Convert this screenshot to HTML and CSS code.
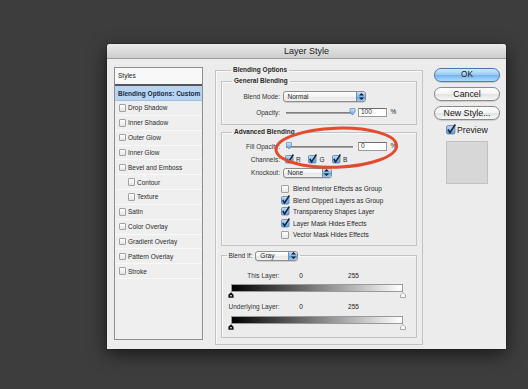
FILE: index.html
```html
<!DOCTYPE html>
<html>
<head>
<meta charset="utf-8">
<title>Layer Style</title>
<link rel="stylesheet" href="styles.css">
</head>
<body>
<svg class="defs" width="0" height="0">
  <defs>
    <linearGradient id="ckg" x1="0" y1="0" x2="0" y2="1">
      <stop offset="0" stop-color="#c9e2fa"/>
      <stop offset="0.5" stop-color="#86bdf0"/>
      <stop offset="1" stop-color="#5a9fe6"/>
    </linearGradient>
    <linearGradient id="thg" x1="0" y1="0" x2="0" y2="1">
      <stop offset="0" stop-color="#cfe5fb"/>
      <stop offset="1" stop-color="#5d9ee0"/>
    </linearGradient>
    <linearGradient id="trk" x1="0" y1="0" x2="0" y2="1">
      <stop offset="0" stop-color="#6f6f6f"/>
      <stop offset="1" stop-color="#b4b4b4"/>
    </linearGradient>
  </defs>
</svg>

<div class="dialog">
  <div class="titlebar">Layer Style</div>
  <div class="dbody">

    <div class="styles">
      <div class="st-head">Styles</div>
      <div class="st-row sel">Blending Options: Custom</div>
      <div class="st-row"><span class="cb"></span>Drop Shadow</div>
      <div class="st-row"><span class="cb"></span>Inner Shadow</div>
      <div class="st-row"><span class="cb"></span>Outer Glow</div>
      <div class="st-row"><span class="cb"></span>Inner Glow</div>
      <div class="st-row"><span class="cb"></span>Bevel and Emboss</div>
      <div class="st-row ind"><span class="cb"></span>Contour</div>
      <div class="st-row ind"><span class="cb"></span>Texture</div>
      <div class="st-row"><span class="cb"></span>Satin</div>
      <div class="st-row"><span class="cb"></span>Color Overlay</div>
      <div class="st-row"><span class="cb"></span>Gradient Overlay</div>
      <div class="st-row"><span class="cb"></span>Pattern Overlay</div>
      <div class="st-row"><span class="cb"></span>Stroke</div>
    </div>

    <fieldset class="grp outer">
      <legend class="lg lg-outer">Blending Options</legend>

      <fieldset class="grp inner gen">
        <legend class="lg lg-inner">General Blending</legend>
        <div class="frow r-mode">
          <span class="lbl">Blend Mode:</span>
          <div class="pop w-mode"><span class="pv">Normal</span><span class="parr"><svg width="5" height="7" viewBox="0 0 5 7"><path d="M2.5 0 L5 2.6 L0 2.6 Z M2.5 7 L5 4.4 L0 4.4 Z" fill="#1b1b1b"/></svg></span></div>
        </div>
        <div class="frow r-opac">
          <span class="lbl">Opacity:</span>
          <div class="ctl">
            <svg class="slider" width="70" height="9" viewBox="0 0 70 9"><rect x="0" y="4" width="67" height="2" fill="url(#trk)"/><path d="M64 0.5 h5 v3.5 l-2.5 3 l-2.5 -3 Z" fill="url(#thg)" stroke="#4f7fb3" stroke-width=".6"/></svg>
            <span class="tf">100</span>
            <span class="pct">%</span>
          </div>
        </div>
      </fieldset>

      <fieldset class="grp inner adv">
        <legend class="lg lg-inner">Advanced Blending</legend>
        <div class="frow r-fill">
          <span class="lbl">Fill Opacity:</span>
          <div class="ctl">
            <svg class="slider" width="70" height="9" viewBox="0 0 70 9"><rect x="0" y="4" width="67" height="2" fill="url(#trk)"/><path d="M0.5 0.5 h5 v3.5 l-2.5 3 l-2.5 -3 Z" fill="url(#thg)" stroke="#4f7fb3" stroke-width=".6"/></svg>
            <span class="tf">0</span>
            <span class="pct">%</span>
          </div>
        </div>
        <div class="frow r-chan">
          <span class="lbl">Channels:</span>
          <div class="ctl chans">
            <span class="chan"><svg class="ck" width="9" height="10" viewBox="0 0 9 10"><rect x="0.5" y="1.5" width="7.5" height="7.5" rx="1.2" fill="url(#ckg)" stroke="#4a6f9e" stroke-width=".7"/><path d="M1.8 5 L3.6 7.8 L8.4 0.5" fill="none" stroke="#14233c" stroke-width="1.5"/></svg>R</span>
            <span class="chan"><svg class="ck" width="9" height="10" viewBox="0 0 9 10"><rect x="0.5" y="1.5" width="7.5" height="7.5" rx="1.2" fill="url(#ckg)" stroke="#4a6f9e" stroke-width=".7"/><path d="M1.8 5 L3.6 7.8 L8.4 0.5" fill="none" stroke="#14233c" stroke-width="1.5"/></svg>G</span>
            <span class="chan"><svg class="ck" width="9" height="10" viewBox="0 0 9 10"><rect x="0.5" y="1.5" width="7.5" height="7.5" rx="1.2" fill="url(#ckg)" stroke="#4a6f9e" stroke-width=".7"/><path d="M1.8 5 L3.6 7.8 L8.4 0.5" fill="none" stroke="#14233c" stroke-width="1.5"/></svg>B</span>
          </div>
        </div>
        <div class="frow r-knock">
          <span class="lbl">Knockout:</span>
          <div class="pop w-knock"><span class="pv">None</span><span class="parr"><svg width="5" height="7" viewBox="0 0 5 7"><path d="M2.5 0 L5 2.6 L0 2.6 Z M2.5 7 L5 4.4 L0 4.4 Z" fill="#1b1b1b"/></svg></span></div>
        </div>
        <div class="checks">
          <div class="chk"><span class="bx"></span>Blend Interior Effects as Group</div>
          <div class="chk"><svg class="ck" width="9" height="10" viewBox="0 0 9 10"><rect x="0.5" y="1.5" width="7.5" height="7.5" rx="1.2" fill="url(#ckg)" stroke="#4a6f9e" stroke-width=".7"/><path d="M1.8 5 L3.6 7.8 L8.4 0.5" fill="none" stroke="#14233c" stroke-width="1.5"/></svg>Blend Clipped Layers as Group</div>
          <div class="chk"><svg class="ck" width="9" height="10" viewBox="0 0 9 10"><rect x="0.5" y="1.5" width="7.5" height="7.5" rx="1.2" fill="url(#ckg)" stroke="#4a6f9e" stroke-width=".7"/><path d="M1.8 5 L3.6 7.8 L8.4 0.5" fill="none" stroke="#14233c" stroke-width="1.5"/></svg>Transparency Shapes Layer</div>
          <div class="chk"><svg class="ck" width="9" height="10" viewBox="0 0 9 10"><rect x="0.5" y="1.5" width="7.5" height="7.5" rx="1.2" fill="url(#ckg)" stroke="#4a6f9e" stroke-width=".7"/><path d="M1.8 5 L3.6 7.8 L8.4 0.5" fill="none" stroke="#14233c" stroke-width="1.5"/></svg>Layer Mask Hides Effects</div>
          <div class="chk"><span class="bx"></span>Vector Mask Hides Effects</div>
        </div>
      </fieldset>

      <fieldset class="grp inner bif">
        <legend class="lg lg-bif"><span class="biflbl">Blend If:</span><span class="pop w-gray"><span class="pv">Gray</span><span class="parr"><svg width="5" height="7" viewBox="0 0 5 7"><path d="M2.5 0 L5 2.6 L0 2.6 Z M2.5 7 L5 4.4 L0 4.4 Z" fill="#1b1b1b"/></svg></span></span></legend>
        <div class="lrow r-this"><span class="lbl">This Layer:</span><span class="v0">0</span><span class="v255">255</span></div>
        <div class="gbar"></div>
        <div class="arrows">
          <svg width="6" height="6" viewBox="0 0 6 6"><path d="M3 0.3 L5.6 2.8 V5.7 H0.4 V2.8 Z" fill="#111"/><rect x="2.3" y="3" width="1.4" height="1.4" fill="#fff"/></svg>
          <svg width="6" height="6" viewBox="0 0 6 6"><path d="M3 0.5 L5.5 2.9 V5.5 H0.5 V2.9 Z" fill="#fff" stroke="#8a8a8a" stroke-width=".7"/></svg>
        </div>
        <div class="lrow r-under"><span class="lbl">Underlying Layer:</span><span class="v0">0</span><span class="v255">255</span></div>
        <div class="gbar"></div>
        <div class="arrows">
          <svg width="6" height="6" viewBox="0 0 6 6"><path d="M3 0.3 L5.6 2.8 V5.7 H0.4 V2.8 Z" fill="#111"/><rect x="2.3" y="3" width="1.4" height="1.4" fill="#fff"/></svg>
          <svg width="6" height="6" viewBox="0 0 6 6"><path d="M3 0.5 L5.5 2.9 V5.5 H0.5 V2.9 Z" fill="#fff" stroke="#8a8a8a" stroke-width=".7"/></svg>
        </div>
      </fieldset>
    </fieldset>

    <div class="buttons">
      <div class="btn ok">OK</div>
      <div class="btn">Cancel</div>
      <div class="btn">New Style...</div>
      <div class="prev"><svg class="ck big" width="10" height="11" viewBox="0 0 9 10"><rect x="0.5" y="1.5" width="7.5" height="7.5" rx="1.2" fill="url(#ckg)" stroke="#4a6f9e" stroke-width=".7"/><path d="M1.8 5 L3.6 7.8 L8.4 0.5" fill="none" stroke="#14233c" stroke-width="1.5"/></svg>Preview</div>
      <div class="swatch"></div>
    </div>

  </div>
</div>

<svg class="ring" width="134" height="48" viewBox="0 0 134 48"><ellipse cx="66.3" cy="23.7" rx="60.3" ry="19.5" transform="rotate(-2 66.3 23.7)" fill="none" stroke="#e24b2c" stroke-width="3"/></svg>
</body>
</html>
```

FILE: styles.css
```css
* { box-sizing: border-box; }

html, body { margin: 0; }

body {
  width: 528px;
  height: 389px;
  overflow: hidden;
  position: relative;
  background: #3d3d3d;
  padding: 44px 0 0 107px;
  font-family: "Liberation Sans", Arial, sans-serif;
  font-size: 6.5px;
  color: #222;
}

.defs { position: absolute; width: 0; height: 0; }

.dialog {
  width: 399px;
  height: 305px;
  background: #ececec;
  border-radius: 3px 3px 0 0;
  box-shadow: 0 5px 18px rgba(0, 0, 0, 0.6), 0 0 2px rgba(0, 0, 0, 0.5);
  display: flex;
  flex-direction: column;
}

.titlebar {
  height: 15px;
  line-height: 14px;
  text-align: center;
  font-size: 9px;
  color: #1e1e1e;
  background: linear-gradient(#e9e9e9, #cdcdcd);
  border-bottom: 1px solid #9c9c9c;
  border-radius: 3px 3px 0 0;
}

.dbody {
  display: flex;
  align-items: flex-start;
  padding: 7px 6px 0 7px;
}

/* ---------- styles list ---------- */
.styles {
  width: 89px;
  height: 273px;
  margin-top: 1px;
  border: 1px solid #8f8f8f;
  background: #efefef;
}

.st-head {
  height: 18px;
  line-height: 16px;
  padding-left: 3px;
  background: #f8f8f8;
  border-bottom: 2px solid #555;
}

.st-row {
  height: 14.85px;
  display: flex;
  align-items: center;
  padding-left: 3.5px;
  border-bottom: 1px solid #f9f9f9;
  color: #2a2a2a;
}

.st-row.sel {
  height: 15px;
  padding-left: 3px;
  font-weight: bold;
  color: #1c2a3c;
  background: #b7d4f3;
  border-bottom: 1px solid #9fbfe3;
}

.st-row.ind { padding-left: 12.5px; }

.cb {
  width: 7.5px;
  height: 7.5px;
  margin-right: 2px;
  border: 1px solid #a3a3a3;
  border-radius: 1px;
  background: linear-gradient(#fff, #e4e4e4);
  flex: none;
}

/* ---------- groups ---------- */
.grp {
  margin: 0;
  padding: 0;
  min-width: 0;
  border: 1px solid #c3c3c3;
  box-shadow: inset 1px 1px 0 #f8f8f8;
}

.lg {
  padding: 0 2px;
  height: 8px;
  line-height: 8px;
  font-weight: bold;
  color: #2a2a2a;
}

.outer {
  width: 208.5px;
  margin-left: 11.5px;
  padding: 0 5px 5.5px 5px;
}

.lg-outer { margin-left: 10.5px; }
.lg-inner { margin-left: 10.5px; }

.inner { width: 196.5px; }

.gen { margin-top: 3px; padding-bottom: 7px; }
.adv { margin-top: 3px; padding-bottom: 4px; }
.bif { margin-top: 4.5px; padding-bottom: 7.5px; }

.frow {
  display: grid;
  grid-template-columns: 58.5px auto;
  column-gap: 2.5px;
  align-items: center;
  justify-content: start;
}

.lbl {
  text-align: right;
  white-space: nowrap;
  color: #333;
}

.r-mode { margin-top: 6px; height: 11px; }
.r-opac { margin-top: 6px; height: 9px; }
.r-fill { margin-top: 6px; height: 9px; }
.r-chan { margin-top: 4px; height: 8px; }
.r-knock { margin-top: 4.5px; height: 10px; }

.ctl {
  display: flex;
  align-items: center;
}

.slider {
  display: block;
  margin-left: 3px;
}

.tf {
  width: 28.5px;
  height: 8.5px;
  margin-left: 2.5px;
  padding-left: 2px;
  line-height: 6.5px;
  background: #fff;
  border: 1px solid #9a9a9a;
  border-top-color: #6f6f6f;
  color: #333;
}

.pct { margin-left: 4px; margin-top: -3px; }

/* popups */
.pop {
  display: flex;
  border: 1px solid #8d8d8d;
  border-radius: 3px;
  background: linear-gradient(#ffffff, #f4f4f4 50%, #e6e6e6 51%, #f2f2f2);
  overflow: hidden;
  box-shadow: 0 0.5px 0.5px rgba(0, 0, 0, 0.25);
}

.pv {
  flex: 1;
  padding-left: 4px;
  display: flex;
  align-items: center;
  color: #222;
}

.parr {
  width: 9px;
  display: flex;
  align-items: center;
  justify-content: center;
  background: linear-gradient(#cbe3fa, #7fb7ee 50%, #5c9fe4 51%, #9ccaf4);
  border-left: 1px solid #6a8fba;
}

.w-mode { width: 83.5px; height: 10.5px; }
.w-knock { width: 49px; height: 10px; }
.w-gray { width: 43px; height: 10px; }

/* channels */
.chans { margin-left: 2px; }

.chan {
  display: flex;
  align-items: center;
  width: 23.5px;
}

.ck {
  display: block;
  flex: none;
  margin-right: 2px;
  margin-top: -1px;
}

.chans .ck { margin-right: 2.5px; }

/* checkbox list */
.checks {
  margin-top: 5.5px;
  margin-left: 59.5px;
}

.chk {
  height: 11.5px;
  display: flex;
  align-items: center;
  color: #2a2a2a;
}

.chk .ck { margin-right: 3px; }

.bx {
  width: 8px;
  height: 8px;
  margin-right: 4px;
  border: 1px solid #a0a0a0;
  border-radius: 1px;
  background: linear-gradient(#fff, #e6e6e6);
  flex: none;
}

/* blend if */
.lg-bif {
  margin-left: 5px;
  height: 11px;
  display: flex;
  align-items: center;
  font-weight: normal;
}

.biflbl { margin-right: 3px; }

.lrow {
  display: flex;
  align-items: center;
  height: 8px;
}

.lrow .lbl { width: 58px; }

.v0 { width: 10px; margin-left: 16.5px; text-align: center; }
.v255 { width: 20px; margin-left: 37.5px; text-align: center; }

.r-this { margin-top: 10px; }
.r-under { margin-top: 4.5px; }

.gbar {
  margin: 5px 0 0 9.5px;
  width: 172px;
  height: 8px;
  border: 1px solid #9a9a9a;
  background: linear-gradient(to right, #000, #808080 50%, #fff);
}

.arrows {
  height: 6px;
  width: 178px;
  margin-left: 6.5px;
  display: flex;
  justify-content: space-between;
}

.arrows svg { display: block; }

/* buttons */
.buttons {
  width: 66px;
  margin-left: 11px;
  margin-top: 2px;
  display: flex;
  flex-direction: column;
}

.btn {
  height: 14px;
  margin-bottom: 5px;
  border-radius: 7px;
  border: 1px solid #8b8b8b;
  background: linear-gradient(#ffffff, #f3f3f3 50%, #e2e2e2 51%, #f7f7f7);
  text-align: center;
  line-height: 12px;
  font-size: 8.8px;
  color: #1a1a1a;
  box-shadow: 0 0.5px 1px rgba(0, 0, 0, 0.25);
}

.btn.ok {
  border-color: #4c79ad;
  background: linear-gradient(#d2e8fc, #98caf4 50%, #6eb3f0 51%, #b4dcfb);
  font-size: 8.2px;
}

.prev {
  display: flex;
  align-items: center;
  height: 10px;
  margin-left: 11.5px;
  font-size: 8.7px;
  color: #1a1a1a;
}

.prev .ck { margin-right: 1.5px; }

.swatch {
  width: 42.5px;
  height: 43.5px;
  margin: 5.5px 0 0 11.5px;
  background: #d7d7d7;
  border: 1px solid #c2c2c2;
}

/* annotation ring */
.ring {
  position: absolute;
  left: 270px;
  top: 124px;
}
```
